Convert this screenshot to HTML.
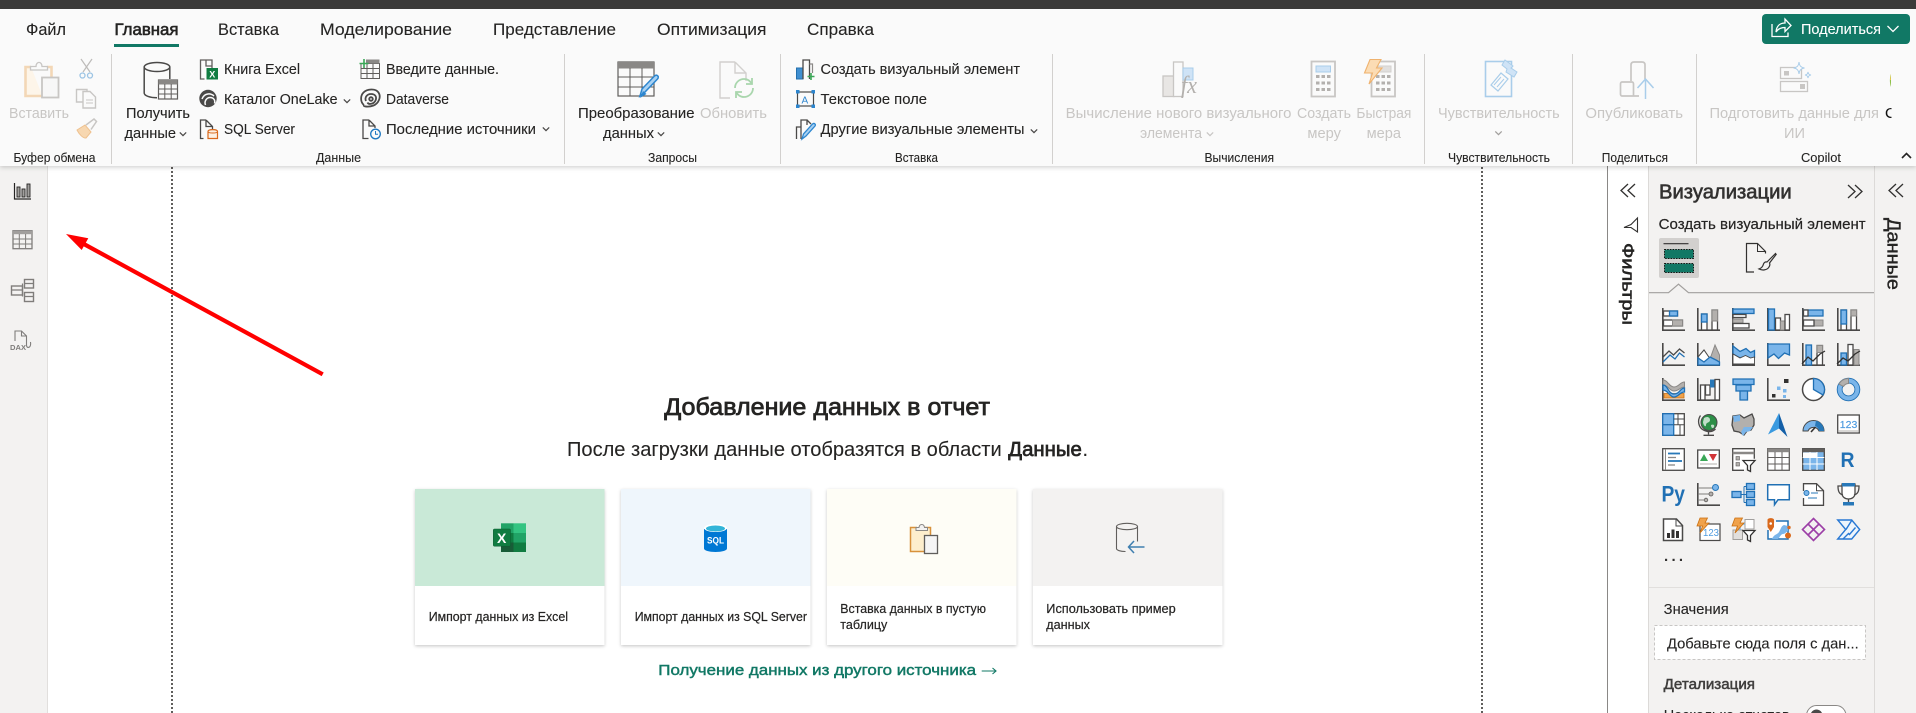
<!DOCTYPE html>
<html lang="ru"><head><meta charset="utf-8"><title>Power BI</title>
<style>
html,body{margin:0;padding:0;background:#fff;overflow:hidden;width:1916px;height:713px}
svg{display:block}
body>svg{filter:blur(.3px)}
text{font-family:"Liberation Sans",sans-serif;fill:#252423;font-size:14.5px;stroke:#252423;stroke-width:.1}
.tab{font-size:16.5px}
.d{fill:#c8c6c4;stroke:none}
.g{font-size:13px}
.c{font-size:12.5px;fill:#252423;stroke:#252423;stroke-width:.2}
.k{fill:none;stroke:#4a4948;stroke-width:1.3}
.a{fill:none;stroke:#4a4948;stroke-width:1.6}
.b{fill:#7ab5ea;stroke:#2070b4;stroke-width:1.3}
.y{fill:#b3b0ad;stroke:#8a8886;stroke-width:1}
.w{fill:#fff;stroke:#4a4948;stroke-width:1.3}
.cv{fill:none;stroke:#4a4948;stroke-width:1.2}
</style></head><body>
<svg xmlns="http://www.w3.org/2000/svg" width="1916" height="713" viewBox="0 0 1916 713">
<defs>
<filter id="sh" x="-10%" y="-10%" width="120%" height="120%"><feDropShadow dx="0" dy="1.2" stdDeviation="1.6" flood-color="#000" flood-opacity=".22"/></filter>
<filter id="rs" x="-2%" y="-20%" width="104%" height="140%"><feDropShadow dx="0" dy="1.5" stdDeviation="2.4" flood-color="#000" flood-opacity=".18"/></filter>
<path id="cv" d="M-3.2-1.6 0 1.6 3.2-1.6"/>
<path id="ax" d="M.8 0V22.200H23"/>
</defs>

<!-- backgrounds -->
<rect width="1916" height="713" fill="#fff"/>
<rect x="0" y="166" width="47" height="547" fill="#f3f2f1"/>
<rect x="47" y="166" width="1" height="547" fill="#e1dfdd"/>
<rect x="1607" y="166" width="1" height="547" fill="#8a8886"/>
<rect x="1648" y="166" width="268" height="547" fill="#f3f2f1"/>
<rect x="1648" y="166" width="1" height="547" fill="#dcdad8"/>
<rect x="1874" y="166" width="1" height="547" fill="#dcdad8"/>
<line x1="172" y1="167" x2="172" y2="713" stroke="#605e5c" stroke-width="2" stroke-dasharray="2 2"/>
<line x1="1482" y1="167" x2="1482" y2="713" stroke="#605e5c" stroke-width="2" stroke-dasharray="2 2"/>

<!-- top -->
<rect x="0" y="9" width="1916" height="157" fill="#fafafa" filter="url(#rs)"/>
<rect width="1916" height="9" fill="#3b3a39"/>

<!-- tabs -->
<text class="tab" x="26" y="35" textLength="40" lengthAdjust="spacingAndGlyphs">Файл</text>
<text class="tab" x="114.500" y="35" style="stroke-width:.6" textLength="64" lengthAdjust="spacingAndGlyphs">Главная</text>
<text class="tab" x="218" y="35" textLength="61" lengthAdjust="spacingAndGlyphs">Вставка</text>
<text class="tab" x="320" y="35" textLength="132" lengthAdjust="spacingAndGlyphs">Моделирование</text>
<text class="tab" x="493" y="35" textLength="123" lengthAdjust="spacingAndGlyphs">Представление</text>
<text class="tab" x="657" y="35" textLength="109.500" lengthAdjust="spacingAndGlyphs">Оптимизация</text>
<text class="tab" x="807" y="35" textLength="67" lengthAdjust="spacingAndGlyphs">Справка</text>
<rect x="114" y="44" width="65" height="3" fill="#117865"/>

<!-- share -->
<rect x="1762" y="14" width="148" height="30" rx="4" fill="#117865"/>
<g fill="none" stroke="#fff" stroke-width="1.300"><path d="M1772 24v12.500h16v-4"/><path d="M1776 32c.5-6 4-9 9-9v-4l6 6.500-6 6v-4c-4 0-7 1.500-9 4.500z"/></g>
<text x="1801" y="34" style="fill:#fff;stroke:#fff" textLength="80" lengthAdjust="spacingAndGlyphs">Поделиться</text>
<path d="M1887.500 26l5.500 5.500 5.500-5.500" fill="none" stroke="#fff" stroke-width="1.300"/>

<!-- separators -->
<g fill="#d2d0ce">
<rect x="111" y="54" width="1" height="110"/><rect x="564" y="54" width="1" height="110"/><rect x="780" y="54" width="1" height="110"/><rect x="1052" y="54" width="1" height="110"/><rect x="1424" y="54" width="1" height="110"/><rect x="1572" y="54" width="1" height="110"/><rect x="1696" y="54" width="1" height="110"/>
</g>

<!-- ribbon text -->
<text class="d" x="9" y="118" textLength="60" lengthAdjust="spacingAndGlyphs">Вставить</text>
<text class="g" x="13.500" y="162" textLength="82" lengthAdjust="spacingAndGlyphs">Буфер обмена</text>
<text x="126" y="118" textLength="64" lengthAdjust="spacingAndGlyphs">Получить</text>
<text x="124.500" y="138" textLength="51.500" lengthAdjust="spacingAndGlyphs">данные</text>
<use href="#cv" x="183" y="134" class="cv"/>
<text x="224" y="74" textLength="76" lengthAdjust="spacingAndGlyphs">Книга Excel</text>
<text x="224" y="104" textLength="113.500" lengthAdjust="spacingAndGlyphs">Каталог OneLake</text>
<use href="#cv" x="347" y="101" class="cv"/>
<text x="224" y="134" textLength="71" lengthAdjust="spacingAndGlyphs">SQL Server</text>
<text x="386" y="74" textLength="113" lengthAdjust="spacingAndGlyphs">Введите данные.</text>
<text x="386" y="104" textLength="63" lengthAdjust="spacingAndGlyphs">Dataverse</text>
<text x="386" y="134" textLength="150" lengthAdjust="spacingAndGlyphs">Последние источники</text>
<use href="#cv" x="546" y="129" class="cv"/>
<text class="g" x="316" y="162" textLength="45" lengthAdjust="spacingAndGlyphs">Данные</text>
<text x="578" y="118" textLength="116.500" lengthAdjust="spacingAndGlyphs">Преобразование</text>
<text x="603" y="138" textLength="51" lengthAdjust="spacingAndGlyphs">данных</text>
<use href="#cv" x="661" y="134" class="cv"/>
<text class="d" x="700" y="118" textLength="67" lengthAdjust="spacingAndGlyphs">Обновить</text>
<text class="g" x="648" y="162" textLength="49" lengthAdjust="spacingAndGlyphs">Запросы</text>
<text x="820.500" y="74" textLength="199.500" lengthAdjust="spacingAndGlyphs">Создать визуальный элемент</text>
<text x="820.500" y="104" textLength="106.500" lengthAdjust="spacingAndGlyphs">Текстовое поле</text>
<text x="820.500" y="134" textLength="204" lengthAdjust="spacingAndGlyphs">Другие визуальные элементы</text>
<use href="#cv" x="1034" y="131" class="cv"/>
<text class="g" x="895" y="162" textLength="43" lengthAdjust="spacingAndGlyphs">Вставка</text>
<text class="d" x="1065.700" y="118" textLength="225.800" lengthAdjust="spacingAndGlyphs">Вычисление нового визуального</text>
<text class="d" x="1140" y="138" textLength="62" lengthAdjust="spacingAndGlyphs">элемента</text>
<use href="#cv" x="1210" y="134" class="cv" style="stroke:#c8c6c4"/>
<text class="g" x="1204.500" y="162" textLength="69.500" lengthAdjust="spacingAndGlyphs">Вычисления</text>
<text class="d" x="1297" y="118" textLength="54" lengthAdjust="spacingAndGlyphs">Создать</text>
<text class="d" x="1307.400" y="138" textLength="33.600" lengthAdjust="spacingAndGlyphs">меру</text>
<text class="d" x="1356.400" y="118" textLength="55" lengthAdjust="spacingAndGlyphs">Быстрая</text>
<text class="d" x="1366.600" y="138" textLength="34.400" lengthAdjust="spacingAndGlyphs">мера</text>
<text class="d" x="1438" y="118" textLength="121.700" lengthAdjust="spacingAndGlyphs">Чувствительность</text>
<use href="#cv" x="1498.500" y="133" class="cv" style="stroke:#a19f9d"/>
<text class="g" x="1448" y="162" textLength="102" lengthAdjust="spacingAndGlyphs">Чувствительность</text>
<text class="d" x="1585.400" y="118" textLength="97.600" lengthAdjust="spacingAndGlyphs">Опубликовать</text>
<text class="g" x="1601.700" y="162" textLength="66.300" lengthAdjust="spacingAndGlyphs">Поделиться</text>
<text class="d" x="1709.500" y="118" textLength="169.500" lengthAdjust="spacingAndGlyphs">Подготовить данные для</text>
<text class="d" x="1784" y="138" textLength="21" lengthAdjust="spacingAndGlyphs">ИИ</text>
<text class="g" x="1801" y="162" textLength="40" lengthAdjust="spacingAndGlyphs">Copilot</text>
<svg x="1885" y="100" width="6.500" height="24"><text x="0" y="18" style="font-size:15px;fill:#111;stroke:#111">C</text></svg>
<path d="M1891 74c-1.500 4-1.500 9 0 13z" fill="#8fc04a"/><path d="M1891 74l-1 6h1z" fill="#f2c94c"/>
<path d="M1902 158l4.500-4.500 4.500 4.500" fill="none" stroke="#252423" stroke-width="1.600"/>

<!-- clipboard disabled -->
<g fill="none">
<path d="M31 67h-5.500v29h17" stroke="#f3d7b6" stroke-width="2.600" fill="#fdf5e9"/>
<path d="M47 67h4.500v10" stroke="#f3d7b6" stroke-width="2.600"/>
<path d="M30.500 70v-3.500H36c0-5.500 6-5.500 6 0h5.500V70z" stroke="#c8c6c4" stroke-width="1.300" fill="#fafafa"/>
<rect x="42" y="77.500" width="16.500" height="20" stroke="#c8c6c4" stroke-width="1.800" fill="#f7f7f7"/>
<path d="M81 59l9 13M92 59l-9 13" stroke="#bdbbb9" stroke-width="1.200"/>
<circle cx="82.500" cy="75.500" r="2.500" stroke="#9cc4e4" stroke-width="1.300"/><circle cx="90" cy="75.500" r="2.500" stroke="#9cc4e4" stroke-width="1.300"/>
<path d="M83 102h-6.500V89.500H87v2M83 91.500h7l5.500 5.500v11H83z" stroke="#c8c6c4" stroke-width="1.400" fill="#fafafa"/><path d="M86 100h7M86 103h7" stroke="#c8c6c4"/>
<path d="M77 130l8-5 6 7-5 6c-3 .5-7-4-9-8z" fill="#f7d7b0" stroke="#eec18f"/><path d="M86 125l8-6 2.500 2.500-5.500 8" stroke="#c8c6c4" stroke-width="1.500"/>
</g>

<!-- get data -->
<g fill="none" stroke="#4a4948" stroke-width="1.500">
<ellipse cx="157" cy="67" rx="12.800" ry="4.500"/>
<path d="M144.200 67v26c0 2.800 6 4.700 12.800 4.700M169.800 67v12"/>
</g>
<rect x="158.500" y="80" width="19" height="19" fill="#fafafa" stroke="#605e5c" stroke-width="1.200"/>
<rect x="158.500" y="80" width="19" height="4.500" fill="#8a8886"/>
<path d="M158.500 89h19M158.500 94h19M164.800 84v15M171.200 84v15" stroke="#605e5c" fill="none"/>

<!-- excel doc -->
<path d="M212 74V60h-11.500v19h4M206 60v6h6.500" fill="none" stroke="#605e5c" stroke-width="1.300"/><rect x="206.500" y="68" width="11.500" height="11.500" fill="#107c41"/>
<text x="209.300" y="77.600" style="font-size:9px;font-weight:700;fill:#fff;stroke:none">X</text>
<!-- onelake -->
<circle cx="208" cy="98.500" r="8.700" fill="#4a4948"/>
<path d="M202 99c2-5.500 8-6.500 12-3M205.500 105c-1.500-3.500 1-7.500 4.500-7.500s5.500 2.500 4.500 6" fill="none" stroke="#fafafa" stroke-width="1.500"/>
<!-- sql doc -->
<path d="M206 120h-5.500v18.500h3M206 120l6.500 6.500v3M206 120v6.500h6.500" fill="none" stroke="#4a4948" stroke-width="1.300"/>
<path d="M208 131.500c0-2.500 9.500-2.500 9.500 0v7h-9.500z" fill="#fdf1e4" stroke="#d9691c" stroke-width="1.200"/><path d="M208 131.500c0 2 9.500 2 9.500 0" fill="none" stroke="#d9691c"/>
<!-- enter data -->
<rect x="361" y="63.500" width="18.500" height="15" fill="#fafafa" stroke="#605e5c"/>
<rect x="366" y="59.500" width="13.500" height="4" fill="#8a8886"/>
<path d="M361 68.500h18.500M361 73.500h18.500M367 63.500v15M373 63.500v15" stroke="#605e5c" fill="none"/>
<path d="M364 59v9M359.500 63.500h9" stroke="#3aa757" stroke-width="1.600" fill="none"/>
<!-- dataverse -->
<g fill="none" stroke="#4a4948" stroke-width="1.800"><path d="M364 105c-3.500-2.500-4-9-.5-12.500s12-4.500 15 0 0 11-5 13-11 1-9.500-.5"/><path d="M366 101c-1.500-3 .5-7 5-7s6 3 4.500 6.500-7 4.500-8 2"/><circle cx="371" cy="99" r="1.800"/></g>
<!-- recent -->
<path d="M369 120h-6v18.500h5.500M369 120l6 6v2M369 120v6h6" fill="none" stroke="#4a4948" stroke-width="1.300"/>
<circle cx="375.500" cy="134" r="4.800" fill="#fafafa" stroke="#1f78c1" stroke-width="1.300"/><path d="M375.500 131v3.200h2.500" fill="none" stroke="#1f78c1"/>
<!-- transform -->
<rect x="618" y="62" width="36" height="34" fill="#fafafa" stroke="#605e5c" stroke-width="1.200"/>
<rect x="618" y="62" width="36" height="6.500" fill="#8a8886"/>
<path d="M618 77h36M618 87h36M630 68v28M642 68v28" stroke="#605e5c" fill="none"/>
<path d="M640 96l2-7 12.500-13c2.500-2 5 .5 3 3L644 93z" fill="#a8d1f3" stroke="#2d86cf" stroke-width="1.500"/>
<path d="M640 98l3-7 3.500 3z" fill="#2d86cf"/>
<!-- refresh -->
<path d="M735 62h-15v36h10M735 62l11 11v8M735 62v11h11" fill="none" stroke="#d2d0ce" stroke-width="1.400"/>
<g fill="none" stroke="#a9d6ad" stroke-width="1.800"><path d="M735 88c0-6 5-9 9-9 4 0 6 2 8 5"/><path d="M753 88c0 6-5 9-9 9-4 0-6-2-8-5"/><path d="M752 78v6h-6M736 98v-6h6"/></g>
<!-- new visual -->
<rect x="796.500" y="68" width="6.500" height="11" fill="#3f8fd1" stroke="#2470ad"/>
<path d="M803 79V60h6.500v19" fill="#fafafa" stroke="#4a4948" stroke-width="1.300"/>
<path d="M809.500 64h3v9" fill="none" stroke="#8a8886" stroke-width="1.200"/>
<path d="M811 73v7M807.500 76.500h7" stroke="#3aa757" stroke-width="1.600"/>
<!-- textbox -->
<rect x="797.500" y="92" width="16" height="14" fill="#fafafa" stroke="#4a4948" stroke-width="1.200"/>
<g fill="#2d86cf"><rect x="796" y="90" width="3.500" height="3.500"/><rect x="811.500" y="90" width="3.500" height="3.500"/><rect x="796" y="104.500" width="3.500" height="3.500"/><rect x="811.500" y="104.500" width="3.500" height="3.500"/></g>
<text x="801.500" y="103.500" style="font-size:10px;fill:#2d86cf;stroke:none">A</text>
<!-- more visuals -->
<path d="M796.500 139v-12h4.500v12M801 139v-19h6v5M807 120l4 4" fill="none" stroke="#4a4948" stroke-width="1.300"/>
<path d="M802 139l1.500-5 9-10c2-1.500 3.500.5 2.500 2l-9 10z" fill="#a8d1f3" stroke="#2d86cf" stroke-width="1.300"/>
<!-- new calc -->
<rect x="1163" y="76" width="11" height="20.500" fill="#e8e6e4" stroke="#c8c6c4" stroke-width="1.300"/>
<rect x="1173.500" y="62" width="9.500" height="34.500" fill="#fafafa" stroke="#c8c6c4" stroke-width="1.300"/>
<rect x="1183" y="68" width="10" height="12" fill="#cfe3f6" stroke="#a9cdea"/>
<text x="1181" y="93" style="font:italic 24px 'Liberation Serif',serif;fill:#b3b0ad;stroke:none" textLength="16" lengthAdjust="spacingAndGlyphs">fx</text>
<!-- measure -->
<rect x="1311.500" y="61.500" width="23.500" height="35" fill="#fafafa" stroke="#c8c6c4" stroke-width="1.800"/>
<rect x="1316" y="66" width="14.500" height="6" fill="#cfe3f6" stroke="#a9cdea"/>
<g fill="#b3b0ad"><rect x="1316" y="75" width="3.500" height="3"/><rect x="1321.500" y="75" width="3.500" height="3"/><rect x="1327" y="75" width="3.500" height="3"/><rect x="1316" y="81.500" width="3.500" height="3"/><rect x="1321.500" y="81.500" width="3.500" height="3"/><rect x="1327" y="81.500" width="3.500" height="3"/><rect x="1316" y="88" width="3.500" height="3"/><rect x="1321.500" y="88" width="3.500" height="3"/><rect x="1327" y="88" width="3.500" height="3"/></g>
<!-- quick measure -->
<rect x="1371.500" y="61.500" width="23.500" height="35" fill="#fafafa" stroke="#c8c6c4" stroke-width="1.800"/>
<rect x="1378" y="66" width="13" height="6" fill="#e1dfdd" stroke="#d2d0ce"/>
<g fill="#b3b0ad"><rect x="1376" y="75" width="3.500" height="3"/><rect x="1381.500" y="75" width="3.500" height="3"/><rect x="1387" y="75" width="3.500" height="3"/><rect x="1376" y="81.500" width="3.500" height="3"/><rect x="1381.500" y="81.500" width="3.500" height="3"/><rect x="1387" y="81.500" width="3.500" height="3"/><rect x="1376" y="88" width="3.500" height="3"/><rect x="1381.500" y="88" width="3.500" height="3"/><rect x="1387" y="88" width="3.500" height="3"/></g>
<path d="M1370 59.500h11l-4.500 8.500h5.500l-13 16 3.500-11h-8z" fill="#fbdcb4" stroke="#efb26e" stroke-width="1.100"/>
<!-- sensitivity -->
<rect x="1485.500" y="61.500" width="26" height="35" fill="#fafafa" stroke="#a9cdea" stroke-width="1.600"/>
<path d="M1491 85l10-12 7 6-10 12z" fill="#fafafa" stroke="#a9cdea" stroke-width="1.200"/><path d="M1494 85l7-8M1497 87l7-8" stroke="#a9cdea"/>
<path d="M1505 60l8 6-2 2 6 4-3 5-8-5 1-3-5-4z" fill="#cfe3f6" stroke="#a9cdea"/>
<!-- publish -->
<path d="M1631 81V65c0-2 1-3 3-3h8c2 0 3 1 3 3v14M1633 96h-11c-1 0-1.500-1-1.500-2V84c0-1 .5-2 1.500-2h10c1 0 1.500 1 1.500 2v12zM1633 96h6" fill="none" stroke="#c8c6c4" stroke-width="1.700"/>
<path d="M1645.500 99V80M1637.500 88l8-9 8 9" fill="none" stroke="#a9cdea" stroke-width="1.500"/>
<!-- copilot prep -->
<rect x="1780.500" y="67.500" width="21" height="11" fill="#fafafa" stroke="#c8c6c4" stroke-width="1.300"/><rect x="1784" y="71" width="5" height="4.500" fill="#c8c6c4"/>
<rect x="1780.500" y="81.500" width="27" height="10" fill="#fafafa" stroke="#c8c6c4" stroke-width="1.300"/><rect x="1800" y="84" width="5" height="5" fill="#c8c6c4"/>
<path d="M1799 62c.5 4 2 5.500 5.500 6-3.500.5-5 2-5.500 6-.5-4-2-5.500-5.500-6 3.500-.5 5-2 5.500-6zM1808 72c.3 2 1 2.700 3 3-2 .3-2.700 1-3 3-.3-2-1-2.700-3-3 2-.3 2.700-1 3-3z" fill="#fafafa" stroke="#a9cdea"/>

<!-- rail icons -->
<g fill="none">
<path d="M14.500 183v16h16.500" stroke="#252423" stroke-width="1.200"/>
<rect x="17" y="187" width="3" height="10" fill="#a19f9d" stroke="#252423" stroke-width=".9"/><rect x="22" y="189" width="3" height="8" fill="#a19f9d" stroke="#252423" stroke-width=".9"/><rect x="27" y="184" width="3" height="13" fill="#a19f9d" stroke="#252423" stroke-width=".9"/>
<rect x="13" y="230.700" width="19" height="18" stroke="#7f7d7b" stroke-width="1.300"/><rect x="13" y="230.700" width="19" height="3.500" fill="#a19f9d"/>
<path d="M13 239h19M13 244h19M19.300 234v15M25.600 234v15" stroke="#7f7d7b"/>
<rect x="11.500" y="286" width="11" height="9" stroke="#7f7d7b" stroke-width="1.400"/><rect x="24.500" y="279.500" width="9" height="8.500" stroke="#7f7d7b" stroke-width="1.400"/><rect x="24.500" y="292.500" width="9" height="9" stroke="#7f7d7b" stroke-width="1.400"/>
<path d="M11.500 290h11M24.500 283.500h9M24.500 296.500h9M22.500 283.500v13" stroke="#7f7d7b" stroke-width="1.200"/>
<path d="M15 341v-10h6.500l5 5v9c0 2 1 3 3 2 1-1 1.500-2 1-5M21.500 331v5h5" stroke="#7f7d7b" stroke-width="1.100"/>
</g>
<text x="10" y="350" style="font-size:7.500px;font-weight:700;fill:#7f7d7b;stroke:none" textLength="16" lengthAdjust="spacingAndGlyphs">DAX</text>

<!-- center -->
<text x="664.300" y="415" style="font-size:24px;stroke-width:.75" textLength="325.700" lengthAdjust="spacingAndGlyphs">Добавление данных в отчет</text>
<text x="567" y="456" style="font-size:20px" textLength="434.700" lengthAdjust="spacingAndGlyphs">После загрузки данные отобразятся в области</text>
<text x="1008.300" y="456" style="font-size:20px;stroke-width:.7" textLength="73.500" lengthAdjust="spacingAndGlyphs">Данные</text>
<text x="1082.500" y="456" style="font-size:20px">.</text>

<g filter="url(#sh)">
<rect x="415" y="489" width="189.500" height="156" fill="#fff"/><rect x="621" y="489" width="189.500" height="156" fill="#fff"/><rect x="827" y="489" width="189.500" height="156" fill="#fff"/><rect x="1033" y="489" width="189.500" height="156" fill="#fff"/>
</g>
<rect x="415" y="489" width="189.500" height="97" fill="#c9e9d7"/>
<rect x="621" y="489" width="189.500" height="97" fill="#eff6fc"/>
<rect x="827" y="489" width="189.500" height="97" fill="#fefdf6"/>
<rect x="1033" y="489" width="189.500" height="97" fill="#f3f2f1"/>
<text class="c" x="428.700" y="621" textLength="139.300" lengthAdjust="spacingAndGlyphs">Импорт данных из Excel</text>
<text class="c" x="634.700" y="621" textLength="172.300" lengthAdjust="spacingAndGlyphs">Импорт данных из SQL Server</text>
<text class="c" x="840.300" y="613" textLength="145.700" lengthAdjust="spacingAndGlyphs">Вставка данных в пустую</text>
<text class="c" x="840.300" y="629" textLength="47" lengthAdjust="spacingAndGlyphs">таблицу</text>
<text class="c" x="1046.300" y="613" textLength="129.400" lengthAdjust="spacingAndGlyphs">Использовать пример</text>
<text class="c" x="1046.300" y="629" textLength="43.700" lengthAdjust="spacingAndGlyphs">данных</text>
<text x="658.300" y="675" style="font-size:15px;fill:#117865;stroke:#117865;stroke-width:.45" textLength="317.700" lengthAdjust="spacingAndGlyphs">Получение данных из другого источника</text>
<path d="M981.700 671h14M992.500 668l3.500 3-3.500 3" fill="none" stroke="#117865" stroke-width="1.100"/>

<!-- excel -->
<rect x="501" y="523.300" width="12.500" height="9.700" fill="#21a366"/><rect x="513.500" y="523.300" width="12.500" height="9.700" fill="#33c481"/>
<rect x="501" y="533" width="12.500" height="9.500" fill="#107c41"/><rect x="513.500" y="533" width="12.500" height="9.500" fill="#21a366"/>
<rect x="501" y="542.500" width="12.500" height="9.500" fill="#185c37"/><rect x="513.500" y="542.500" width="12.500" height="9.500" fill="#107c41"/>
<rect x="493.300" y="529" width="17.200" height="17.200" rx="1" fill="#107c41" stroke="#0b5a2f" stroke-width=".5"/>
<text x="497" y="543" style="font-size:14px;font-weight:700;fill:#fff;stroke:none">X</text>
<!-- sql -->
<path d="M704 529v19.500c0 2 5 3.500 11.500 3.500s11.500-1.500 11.500-3.500V529z" fill="#0078d4"/>
<ellipse cx="715.500" cy="528" rx="11.500" ry="4" fill="#fff"/><ellipse cx="715.500" cy="528.500" rx="9.500" ry="3" fill="#32b4d8"/>
<text x="707" y="543.500" style="font-size:9.500px;font-weight:700;fill:#fff;stroke:none" textLength="17" lengthAdjust="spacingAndGlyphs">SQL</text>
<!-- paste -->
<path d="M917 527.500h-6.500v24h20v-24H925" fill="#fdeecd" stroke="#d8913b" stroke-width="1.500"/>
<path d="M916 530.500v-3h3c.5-4 5-4 5.500 0h3v3z" fill="#f3f2f1" stroke="#8a8886" stroke-width="1"/>
<rect x="924.500" y="535.500" width="13" height="18" fill="#f5f5f5" stroke="#605e5c" stroke-width="1.300"/>
<!-- sample -->
<g fill="none" stroke="#605e5c" stroke-width="1.100"><ellipse cx="1127" cy="526.500" rx="10.500" ry="3.200"/><path d="M1116.500 526.500v22c0 1.800 4 3 9 3M1137.500 526.500v15"/></g>
<path d="M1144.500 547h-16M1134 541l-5.500 6 5.500 6" fill="none" stroke="#3f7fb0" stroke-width="1.500"/>

<!-- red arrow -->
<line x1="322.700" y1="374.300" x2="82" y2="243" stroke="#ff0000" stroke-width="4.200"/>
<polygon points="66,234 88.300,238.300 81.700,250" fill="#ff0000"/>

<!-- right side -->
<g fill="none" stroke="#323130" stroke-width="1.300"><path d="M1628 184l-7 6.500 7 6.500M1635 184l-7 6.500 7 6.500"/><path d="M1848 185l7 6.500-7 6.500M1855 185l7 6.500-7 6.500"/><path d="M1896 184l-7 6.500 7 6.500M1903 184l-7 6.500 7 6.500"/></g>
<path d="M1637.500 218v14l-6.500-4.500h-7l7-3z" fill="none" stroke="#323130" stroke-width="1.100"/>
<text transform="translate(1622.500 243) rotate(90)" style="font-size:16.500px;stroke-width:.55" textLength="82" lengthAdjust="spacingAndGlyphs">Фильтры</text>
<text transform="translate(1887.500 218) rotate(90)" style="font-size:18px;stroke-width:.4" textLength="72" lengthAdjust="spacingAndGlyphs">Данные</text>
<text x="1659" y="198.500" style="font-size:20px;fill:#323130;stroke:#323130;stroke-width:.6" textLength="132.700" lengthAdjust="spacingAndGlyphs">Визуализации</text>
<text x="1658.700" y="229" style="stroke-width:.2" textLength="207" lengthAdjust="spacingAndGlyphs">Создать визуальный элемент</text>

<rect x="1659" y="238" width="40" height="40" rx="2" fill="#d2d0ce"/>
<path d="M1663.500 243.700h25" stroke="#323130" stroke-width="1.200"/>
<rect x="1664.500" y="249.500" width="29" height="9" fill="#117865" stroke="#111" stroke-dasharray="1.500 1.200"/>
<rect x="1664.500" y="263.500" width="29" height="9" fill="#117865" stroke="#111" stroke-dasharray="1.500 1.200"/>
<path d="M1754 272h-7.500v-28.500h11l8 8v2" fill="none" stroke="#323130" stroke-width="1.200"/><path d="M1757.500 243.500v8h8" fill="none" stroke="#323130"/>
<path d="M1776 253l-9 9c-1.500-.5-3 .5-3.500 2-.5 2-1.500 4-4.500 5 3 1.500 8 1.500 10-2 1-1.500 1-3 .5-4l7-9" fill="none" stroke="#323130" stroke-width="1.200"/>
<path d="M1649 292.700h19.500l10-8.500 10 8.500H1874" fill="none" stroke="#a19f9d" stroke-width="1.200"/>

<!-- viz icons row 1 y=308 -->
<g transform="translate(1662 308)"><use href="#ax" class="a"/><rect x="1.500" y="3" width="14" height="5" class="w"/><rect x="7.500" y="3" width="8" height="5" class="b"/><rect x="1.500" y="12" width="19" height="6" class="w"/><rect x="10.500" y="12" width="10" height="6" class="y"/></g>
<g transform="translate(1697 308)"><use href="#ax" class="a"/><rect x="4.500" y="6" width="5.500" height="16" class="w"/><rect x="4.500" y="6" width="5.500" height="8" class="b"/><rect x="15" y="2" width="5.500" height="20" class="w"/><rect x="15" y="2" width="5.500" height="11" class="y"/></g>
<g transform="translate(1732 308)"><use href="#ax" class="a"/><rect x="1" y="1" width="21" height="4.500" class="b"/><rect x="1" y="6.500" width="13" height="3" class="w"/><rect x="1" y="11" width="10" height="4" class="y"/><rect x="1" y="15.500" width="16" height="4.500" class="w"/></g>
<g transform="translate(1767 308)"><use href="#ax" class="a"/><rect x="1.500" y="1" width="6" height="21" class="b"/><rect x="8.500" y="10" width="5" height="12" class="w"/><rect x="13.500" y="13" width="5" height="9" class="y"/><rect x="18" y="6.500" width="4.500" height="15.500" class="w"/></g>
<g transform="translate(1802 308)"><use href="#ax" class="a"/><rect x="1.500" y="2" width="19.500" height="6" class="b"/><rect x="1.500" y="2" width="4.500" height="6" class="w"/><rect x="1.500" y="12" width="19.500" height="6" class="y"/><rect x="1.500" y="12" width="10.500" height="6" class="w"/></g>
<g transform="translate(1837 308)"><use href="#ax" class="a"/><rect x="4" y="2" width="5.500" height="20" class="w"/><rect x="4" y="2" width="5.500" height="14" class="b"/><rect x="14" y="2" width="5.500" height="20" class="w"/><rect x="14" y="2" width="5.500" height="6" class="y"/></g>
<!-- row 2 y=343 -->
<g transform="translate(1662 343)"><use href="#ax" class="a"/><path d="M1 14l6-6 4.500 4 6-6 5 4" fill="none" stroke="#4a4948" stroke-width="1.300"/><path d="M1 19l7-7 5 4 4.500-6 5 4" fill="none" stroke="#2070b4" stroke-width="1.300"/></g>
<g transform="translate(1697 343)"><use href="#ax" class="a"/><path d="M1 14l6-7 6 9 5-14 4.500 10v10H1z" class="y"/><path d="M1 14l6-7 5.500 8-7 5z" fill="#fff" stroke="#4a4948"/><path d="M1 22v-7l6 4 6-5 6 3 3.500 2V22z" class="b"/></g>
<g transform="translate(1732 343)"><use href="#ax" class="a"/><path d="M1 3l7 5.500 6-3 4.500 4 4-2v7l-4 1-5-2.500L8 15l-7-4z" class="b"/><path d="M1 11l7 4 5.500-2.500 5 2.500 4-1v7H1z" fill="#fff" stroke="#4a4948" stroke-width=".9"/></g>
<g transform="translate(1767 343)"><use href="#ax" class="a"/><path d="M1 1h21.500v11l-5-2-6 5.500L7 11l-6 4z" class="b"/></g>
<g transform="translate(1802 343)"><use href="#ax" class="a"/><rect x="4" y="2" width="5.500" height="20" class="b"/><rect x="15" y="2.500" width="5.500" height="19.500" class="w"/><rect x="15" y="2.500" width="5.500" height="7" class="y"/><path d="M0 21l6-7 5 4 7-7 5-3" fill="none" stroke="#323130" stroke-width="1.300"/></g>
<g transform="translate(1837 343)"><use href="#ax" class="a"/><rect x="4" y="10" width="5.500" height="12" class="b"/><rect x="11" y="1.500" width="5" height="20.500" class="w"/><rect x="17" y="6.500" width="5" height="15.500" class="y"/><path d="M0 21l6-6 5 3 7-7 5-3" fill="none" stroke="#323130" stroke-width="1.300"/></g>
<!-- row 3 y=378 -->
<g transform="translate(1662 378)"><use href="#ax" class="a"/><path d="M1 2c5 0 6 7 11 7s6-5 10.500-5v5c-4 0-6 4-10.500 4s-6-6-11-6z" class="y"/><path d="M2 15.500h20v4.500H2z" fill="#f0a24b" stroke="#c96f10" stroke-width=".8"/><path d="M1 7c5 0 5 9 11 9s6-6 10.500-6v4c-5 0-6 5-10.500 5S6 12 1 12z" class="b"/></g>
<g transform="translate(1697 378)"><use href="#ax" class="a"/><rect x="3.500" y="7" width="4.500" height="15" class="w"/><rect x="8.500" y="7" width="4.500" height="10" class="w"/><rect x="13" y="1.500" width="4.500" height="8" fill="#2878b8"/><rect x="18" y="1.500" width="4.500" height="20.500" class="w"/></g>
<g transform="translate(1732 378)"><path d="M1 1h21v5.500H1z" class="b"/><path d="M4 7h15v6H4z" class="b"/><path d="M8 13h7.500v9H8z" class="b"/></g>
<g transform="translate(1767 378)"><use href="#ax" class="a"/><rect x="17" y="1" width="4.500" height="4" fill="#323130"/><rect x="10" y="8.500" width="3.500" height="3.500" fill="#7ab5ea"/><rect x="16" y="11" width="3.500" height="3.500" fill="#7ab5ea"/><rect x="5" y="16" width="3.500" height="3.500" fill="#323130"/><rect x="16" y="17" width="3" height="3" fill="#7ab5ea"/></g>
<g transform="translate(1802 378)"><circle cx="11.500" cy="11.500" r="11" fill="#fff" stroke="#4a4948" stroke-width="1.500"/><path d="M11.500 11.500V.5A11 11 0 0 1 21 17z" class="b"/></g>
<g transform="translate(1837 378)"><circle cx="11.500" cy="11.500" r="9" fill="none" stroke="#7ab5ea" stroke-width="4.600"/><circle cx="11.500" cy="11.500" r="11.300" fill="none" stroke="#2070b4" stroke-width=".9"/><circle cx="11.500" cy="11.500" r="6.400" fill="none" stroke="#2070b4" stroke-width=".9"/><path d="M11.500 .5A11 11 0 0 0 2 6l4.500 2.500a6 6 0 0 1 5-3z" class="y"/></g>
<!-- row 4 y=413 -->
<g transform="translate(1662 413)"><rect x=".7" y=".7" width="21.600" height="21.600" fill="#fff" stroke="#4a4948" stroke-width="1.300"/><rect x=".7" y=".7" width="11" height="11" class="b"/><rect x=".7" y="11.700" width="11" height="10.600" class="b"/><path d="M16 .7v11M11.700 6h10.600M11.700 11.700h10.600M18 11.700v10.600" stroke="#4a4948" fill="none"/></g>
<g transform="translate(1697 413)"><circle cx="12" cy="9.500" r="8" fill="#2c8f47" stroke="#4a4948"/><path d="M7 5c3-2 6-1 6 2s-4 2-4 5-3 0-3-3zM14 12c2-1 4 0 3 2s-3 1-3-2z" fill="#fff" opacity=".7"/><path d="M3.500 2.500c-3.500 5-2 12 3 14.500s9 2 12-1M11.500 19v2.500M6.500 22.300h10.500" fill="none" stroke="#4a4948" stroke-width="1.300"/></g>
<g transform="translate(1732 413)"><path d="M1 3l7-1 4 3 8-4 2 5v6l-3 5-4 1-3 4-5-3-5-1-2-6z" fill="#b3b0ad" stroke="#4a4948" stroke-width="1.300"/><path d="M1 3l7-1v6l-6 1zM12 14h9l-3 4-4 1-3 4-2-4z" fill="#7ab5ea"/></g>
<g transform="translate(1767 413)"><path d="M12 0l-11 21.500 11-6z" fill="#3a9ae0"/><path d="M12 0l8.500 24-8.500-8.500z" fill="#1460a8"/></g>
<g transform="translate(1802 413)"><path d="M1 18a10.500 10.500 0 0 1 21 0h-5a6 6 0 0 0-11 0z" fill="#7ab5ea" stroke="#4a4948"/><path d="M14 7.600a10.500 10.500 0 0 1 8 10.400h-5a6 6 0 0 0-4-5z" fill="#2878b8"/><path d="M9 19l4.500-5" stroke="#323130" stroke-width="1.600"/></g>
<g transform="translate(1837 413)"><rect x=".7" y="2" width="21.600" height="18" fill="#fff" stroke="#4a4948" stroke-width="1.300"/><text x="2.800" y="15" style="font-size:10.500px;fill:#4f9ce0;stroke:#4f9ce0;stroke-width:.2" textLength="17.500" lengthAdjust="spacingAndGlyphs">123</text><path d="M.7 18h21.600" stroke="#b3b0ad"/></g>
<!-- row 5 y=448 -->
<g transform="translate(1662 448)"><rect x=".7" y=".7" width="21.600" height="21.600" fill="#fff" stroke="#4a4948" stroke-width="1.300"/><path d="M3.500 1v21" stroke="#8a8886"/><path d="M6 5.500h12" stroke="#2878b8" stroke-width="1.800"/><path d="M6 9.500h8" stroke="#8a8886" stroke-width="1.300"/><path d="M6 13h14" stroke="#2878b8" stroke-width="1.800"/><path d="M6 17h7" stroke="#8a8886" stroke-width="1.300"/></g>
<g transform="translate(1697 448)"><rect x=".7" y="2" width="21.600" height="18" fill="#fff" stroke="#4a4948" stroke-width="1.300"/><path d="M7 6l4 7H3z" fill="#3aa757"/><path d="M12 6h8l-4 7z" fill="#d13438"/><path d="M3 16h17" stroke="#b3b0ad"/></g>
<g transform="translate(1732 448)"><path d="M12 22.300H.7V.7h21.600v10" fill="#fff" stroke="#4a4948" stroke-width="1.300"/><path d="M.7 5h21.600" stroke="#8a8886" stroke-width="2.500"/><rect x="4" y="8.500" width="3.500" height="3.500" fill="#b3b0ad" stroke="#605e5c" stroke-width=".6"/><rect x="4" y="14.500" width="3.500" height="3.500" fill="#b3b0ad" stroke="#605e5c" stroke-width=".6"/><path d="M11 12.500h12l-4.500 5v6l-3-1.500v-4.500z" fill="#fff" stroke="#323130" stroke-width="1.300"/></g>
<g transform="translate(1767 448)"><rect x=".7" y=".7" width="21.600" height="21.600" fill="#fff" stroke="#605e5c" stroke-width="1.300"/><rect x=".7" y=".7" width="21.600" height="3.500" fill="#8a8886"/><path d="M.7 9.500h21.600M.7 16h21.600M8 4v18M15 4v18" stroke="#605e5c" fill="none"/></g>
<g transform="translate(1802 448)"><rect x=".7" y=".7" width="21.600" height="21.600" fill="#7ab5ea" stroke="#4a4948" stroke-width="1.300"/><rect x=".7" y=".7" width="21.600" height="3.500" fill="#605e5c"/><rect x="1" y="4.500" width="6.500" height="4.500" fill="#fff"/><rect x="8.500" y="4.500" width="6" height="4.500" fill="#fff"/><path d="M.7 9.500h21.600M.7 16h21.600M8 4v18M15 4v18" stroke="#fff" fill="none"/></g>
<text x="1840.500" y="467" style="font-size:21px;font-weight:700;fill:#2070b4;stroke:none" textLength="14" lengthAdjust="spacingAndGlyphs">R</text>
<!-- row 6 y=483 -->
<text x="1661.500" y="501.500" style="font-size:22px;font-weight:700;fill:#2070b4;stroke:none" textLength="23.500" lengthAdjust="spacingAndGlyphs">Py</text>
<g transform="translate(1697 483)"><path d="M.8 0v22.200H23" class="a"/><path d="M1 5h15M1 11h12M1 17h7" stroke="#7f7d7b" fill="none"/><circle cx="18.500" cy="4.500" r="3" fill="#7ab5ea" stroke="#2878b8"/><circle cx="14" cy="11" r="2" fill="#b3b0ad" stroke="#605e5c" stroke-width=".8"/><circle cx="9" cy="17" r="1.800" fill="#b3b0ad" stroke="#605e5c" stroke-width=".8"/></g>
<g transform="translate(1732 483)"><rect x="0" y="8.500" width="9" height="6" class="b"/><rect x="14.500" y=".5" width="8" height="6" class="b"/><rect x="14.500" y="8.500" width="8" height="6" class="b"/><rect x="14.500" y="16.500" width="8" height="6" class="b"/><path d="M9 11.500h5.500M12 3.500h2.500M12 19.500h2.500M12 3.500v16" stroke="#2070b4" fill="none"/></g>
<g transform="translate(1767 483)"><path d="M.7 1.700h21.600v15H11l-3.500 5v-5H.7z" fill="#fff" stroke="#2070b4" stroke-width="1.500"/></g>
<g transform="translate(1802 483)"><path d="M1.500 8V.7h13l7 7v14.600H1.500V15" fill="#fff" stroke="#4a4948" stroke-width="1.300"/><path d="M14.500.7v7h7" fill="none" stroke="#4a4948"/><circle cx="4.500" cy="10" r="2.500" fill="#7ab5ea" stroke="#2878b8"/><path d="M9 10h7M6 15h9" stroke="#2878b8"/></g>
<g transform="translate(1837 483)"><path d="M5 1h13v9c0 4-3 6-6.500 6S5 14 5 10z" fill="#fff" stroke="#4a4948" stroke-width="1.300"/><rect x="5" y="0" width="13" height="3.500" fill="#2878b8"/><path d="M5 3H1c0 5 1 8 5 9M18 3h4c0 5-1 8-5 9M11.500 16v3" fill="none" stroke="#4a4948" stroke-width="1.300"/><rect x="6" y="19" width="11" height="3.500" fill="#2878b8"/></g>
<!-- row 7 y=518 -->
<g transform="translate(1662 518)"><path d="M1.500 1h13l6 6.500v15h-19z" fill="#fff" stroke="#4a4948" stroke-width="1.500"/><path d="M14 1v7h6.500" fill="none" stroke="#4a4948"/><rect x="5" y="15" width="3" height="5" fill="#323130"/><rect x="9.500" y="11.500" width="3" height="8.500" fill="#323130"/><rect x="14" y="13" width="3" height="7" fill="#323130"/></g>
<g transform="translate(1697 518)"><rect x="3" y="6" width="20" height="16.500" fill="#fff" stroke="#4a4948" stroke-width="1.200"/><text x="6" y="18" style="font-size:10.500px;fill:#4f9ce0;stroke:none" textLength="16" lengthAdjust="spacingAndGlyphs">123</text><path d="M0 0h7.500L5 5h4l-9 10 2.500-7H-3z" transform="translate(3 0)" fill="#f0a24b" stroke="#c96f10" stroke-width=".8"/></g>
<g transform="translate(1732 518)"><rect x="1" y="12" width="9.500" height="9.500" fill="#e1dfdd" stroke="#a19f9d"/><rect x="13" y="1.500" width="9" height="9.500" fill="#fff" stroke="#a19f9d"/><path d="M8 6v6M8 6h5" stroke="#7ab5ea" stroke-width="1.500"/><path d="M11 12.500h12l-4.500 5v6l-3-1.500v-4.500z" fill="#fff" stroke="#323130" stroke-width="1.300"/><path d="M0 0h7.500L5 5h4L0 15l2.500-7H-3z" transform="translate(3 0)" fill="#f0a24b" stroke="#c96f10" stroke-width=".8"/></g>
<g transform="translate(1767 518)"><path d="M9 3h12v18H1V12" fill="#fff" stroke="#2070b4" stroke-width="1.500"/><path d="M5 21c2-5 5-4 7-7s2-6 5-7l4 1v5c-2 1-3 3-5 3s-3 3-5 5z" fill="#7ab5ea"/><path d="M.5 2c0-2.500 6.500-2.500 6.500 0v7l-3.200 5L.5 9z" fill="#d9691c"/><circle cx="3.700" cy="5.500" r="1.300" fill="#fff"/><circle cx="21" cy="17.500" r="3" fill="#d9691c"/><circle cx="22" cy="9.500" r="1.700" fill="#d9691c"/></g>
<g transform="translate(1802 518)" fill="none" stroke="#9c3fa7" stroke-width="1.600"><path d="M11.500 .5l11 11-11 11-11-11z"/><path d="M6 6l11 11M17 6L6 17"/></g>
<g transform="translate(1837 518)" fill="none" stroke="#2878d4" stroke-width="1.400"><path d="M.7 2h14l8 9.500-8 9.500H.7l8-9.500z" fill="#eef5fc"/><path d="M9 11.500L15 2M12 17l6.500-7.500M6 21l6-6"/></g>
<text x="1664" y="561" style="font-size:15px;font-weight:700;letter-spacing:3.300px;fill:#323130;stroke:none">...</text>

<rect x="1649" y="587" width="225" height="1" fill="#e1dfdd"/>
<text x="1663.700" y="614" textLength="65" lengthAdjust="spacingAndGlyphs">Значения</text>
<rect x="1654.500" y="625.500" width="211" height="34" fill="#fff" stroke="#c8c6c4" stroke-dasharray="3 2"/>
<text x="1667" y="648.500" textLength="191.700" lengthAdjust="spacingAndGlyphs">Добавьте сюда поля с дан...</text>
<text x="1663.700" y="689" style="fill:#3f3e3d;stroke:#3f3e3d;stroke-width:.5" textLength="91.300" lengthAdjust="spacingAndGlyphs">Детализация</text>
<text x="1663.700" y="720" textLength="126" lengthAdjust="spacingAndGlyphs">Несколько отчетов</text>
<rect x="1806.500" y="705.500" width="39.500" height="20" rx="10" fill="#fff" stroke="#8a8886"/>
<circle cx="1816.500" cy="715.500" r="6" fill="#4a4948"/>
</svg>
</body></html>
